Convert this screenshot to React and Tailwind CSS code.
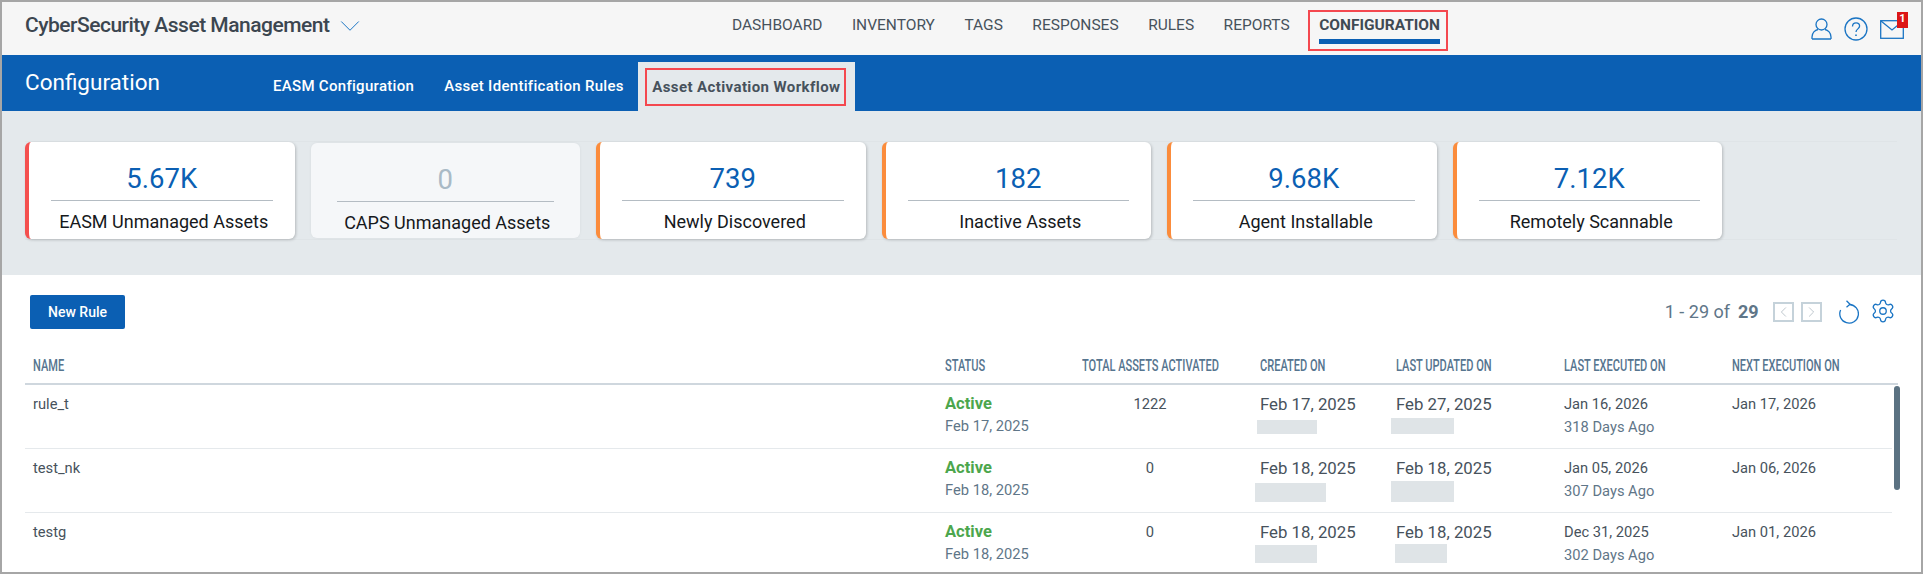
import { ChevronDown, ChevronLeft, ChevronRight, Settings } from 'lucide-react'

const NAV = ['DASHBOARD', 'INVENTORY', 'TAGS', 'RESPONSES', 'RULES', 'REPORTS']

const CARDS = [
  { value: '5.67K', label: 'EASM Unmanaged Assets', bar: 'border-l-[#f4504f]' },
  { value: '0', label: 'CAPS Unmanaged Assets', muted: true },
  { value: '739', label: 'Newly Discovered', bar: 'border-l-[#fb8c3c]' },
  { value: '182', label: 'Inactive Assets', bar: 'border-l-[#fb8c3c]' },
  { value: '9.68K', label: 'Agent Installable', bar: 'border-l-[#fb8c3c]' },
  { value: '7.12K', label: 'Remotely Scannable', bar: 'border-l-[#fb8c3c]' },
]

const ROWS = [
  {
    name: 'rule_t',
    activeOn: 'Feb 17, 2025',
    total: '1222',
    created: 'Feb 17, 2025',
    createdMask: 'w-[60px] h-[14px] mt-[5px] -ml-[3px]',
    updated: 'Feb 27, 2025',
    updatedMask: 'w-[63px] h-[16px] mt-[3px] -ml-[5px]',
    lastRun: 'Jan 16, 2026',
    daysAgo: '318 Days Ago',
    nextRun: 'Jan 17, 2026',
  },
  {
    name: 'test_nk',
    activeOn: 'Feb 18, 2025',
    total: '0',
    created: 'Feb 18, 2025',
    createdMask: 'w-[71px] h-[19px] mt-[4px] -ml-[5px]',
    updated: 'Feb 18, 2025',
    updatedMask: 'w-[63px] h-[21px] mt-[2px] -ml-[5px]',
    lastRun: 'Jan 05, 2026',
    daysAgo: '307 Days Ago',
    nextRun: 'Jan 06, 2026',
  },
  {
    name: 'testg',
    activeOn: 'Feb 18, 2025',
    total: '0',
    created: 'Feb 18, 2025',
    createdMask: 'w-[62px] h-[18px] mt-[2px] -ml-[5px]',
    updated: 'Feb 18, 2025',
    updatedMask: 'w-[52px] h-[19px] mt-[1px] -ml-[1px]',
    lastRun: 'Dec 31, 2025',
    daysAgo: '302 Days Ago',
    nextRun: 'Jan 01, 2026',
  },
]

const COLS = 'grid grid-cols-[912px_137px_178px_136px_168px_168px_1fr] pl-2'

function HeaderCell({ children }) {
  return (
    <span className="inline-block origin-left scale-x-[0.69] whitespace-nowrap text-[16px] font-medium text-[#56758f]">
      {children}
    </span>
  )
}

function StatCard({ value, label, bar, muted }) {
  return (
    <div
      className={
        muted
          ? 'my-px w-[269.5px] rounded-md bg-[#f5f7f9] px-[26px] text-center shadow-[0_0_3px_rgba(0,0,0,0.06)]'
          : `w-[269.5px] rounded-md border-l-4 bg-white pl-[22px] pr-[22px] text-center shadow-[1px_1px_3px_rgba(0,0,0,0.2)] ${bar}`
      }
    >
      <div className={`h-[58px] pt-[17px] text-[27.5px] leading-[40px] ${muted ? 'text-[#a9bac6]' : 'text-[#0b5fb3]'}`}>
        {value}
      </div>
      <div className="border-t border-[#b4bcc3] pl-[4px] pt-[9px] text-[18px] leading-[24px] text-[#16191c]">{label}</div>
    </div>
  )
}

function UserIcon() {
  return (
    <svg width="21" height="22" viewBox="0 0 21 22" fill="none" stroke="#1b75c4" strokeWidth="1.3">
      <circle cx="10.5" cy="6.5" r="5.5" />
      <path d="M1 21v-2c0-4 3-7 6-7.5M20 21v-2c0-4-3-7-6-7.5M1 21h19" />
    </svg>
  )
}

function HelpIcon() {
  return (
    <svg width="24" height="24" viewBox="0 0 24 24" fill="none" stroke="#1b75c4" strokeWidth="1.3">
      <circle cx="12" cy="12" r="11" />
      <path d="M8.5 9.5c0-2.2 1.6-3.6 3.6-3.6s3.5 1.4 3.5 3.2c0 2.8-3.6 2.8-3.6 6" />
      <path d="M12 17.5v1.6" strokeWidth="1.6" />
    </svg>
  )
}

function MailIcon() {
  return (
    <svg width="24" height="19" viewBox="0 0 24 19" fill="none" stroke="#1b75c4" strokeWidth="1.3">
      <rect x="0.7" y="0.7" width="22.6" height="17.6" />
      <path d="M1 1l11 9 11-9" />
    </svg>
  )
}

function RefreshIcon() {
  return (
    <svg width="21" height="24" viewBox="0 0 21 24" fill="none" stroke="#1b75c4" strokeWidth="1.3">
      <path d="M11.5 4.5A9.3 9.3 0 1 1 2.6 10" />
      <path d="M8.5 0.8l3.5 3.5-3.5 3" />
    </svg>
  )
}

function PagerButton({ children }) {
  return (
    <div className="flex h-[20px] w-[21px] items-center justify-center border-2 border-[#c5d2da] text-[#a3b0b8]">
      {children}
    </div>
  )
}

export default function App() {
  return (
    <div className="h-[574px] w-[1923px] overflow-hidden border-2 border-[#a6a6a6] bg-white font-['Roboto',sans-serif]">
      {/* Top nav */}
      <header className="relative flex h-[53px] items-start bg-[#f6f6f6] pl-[23px]">
        <div className="flex h-[46px] w-[707px] items-center pt-px">
          <span className="text-[21px] font-medium tracking-[-0.5px] text-[#3c4650]">CyberSecurity Asset Management</span>
          <ChevronDown className="ml-[4px] text-[#1b75c4]" size={34} strokeWidth={0.7} />
        </div>
        <nav className="flex gap-[29.5px] pt-[13px]">
          {NAV.map((item) => (
            <span key={item} className="text-[15.5px] leading-[20px] text-[#47525c]">
              {item}
            </span>
          ))}
          <div className="relative">
            <span className="block text-[15.5px] font-bold leading-[20px] text-[#3f4a54]">CONFIGURATION</span>
            <div className="mt-[4px] h-[5px] bg-[#0b5fb3]" />
            <div className="absolute -left-[11px] -right-[8px] -top-[5px] h-[41px] border-2 border-[#f4484f]" />
          </div>
        </nav>
        <div className="ml-auto flex items-center gap-[12px] pr-[17px] pt-[15px]">
          <UserIcon />
          <HelpIcon />
          <div className="relative">
            <MailIcon />
            <span className="absolute -right-[4px] -top-[8px] flex h-[16px] w-[11px] items-center justify-center bg-[#dc1616] text-[11px] font-bold text-white">
              1
            </span>
          </div>
        </div>
      </header>

      {/* Section bar */}
      <div className="flex h-[56px] items-end bg-[#0b5fb3] pl-[23px]">
        <h1 className="h-[56px] w-[248px] pt-[12px] text-[22.5px] leading-[30px] text-white">Configuration</h1>
        <div className="flex gap-[30px] self-stretch pt-[21px] text-[15px] font-medium leading-[20px] tracking-[0.3px] text-white">
          <span>EASM Configuration</span>
          <span>Asset Identification Rules</span>
        </div>
        <div className="ml-[14px] h-[49px] w-[217px] bg-[#e4e9ec] px-[7px] pt-[6px]">
          <div className="flex h-[38px] w-[201px] items-center justify-center border-2 border-[#f4484f] pl-[2px] text-[15px] font-bold tracking-[0.4px] text-[#47525c]">
            Asset Activation Workflow
          </div>
        </div>
      </div>

      {/* Stat cards */}
      <section className="h-[164px] bg-[#e4e9ec] pl-[23px] pr-[24px] pt-[30px]">
        <div className="flex h-[99px] gap-[16px] border-y border-[#dfe4e7]">
          {CARDS.map((card) => (
            <StatCard key={card.label} {...card} />
          ))}
        </div>
      </section>

      {/* Table */}
      <section className="relative px-[23px]">
        <div className="flex h-[74px] items-start justify-between pl-[5px] pr-[2px] pt-[20px]">
          <button className="h-[34px] w-[95px] rounded-[2px] bg-[#0b5fb3] text-[14px] font-medium text-white">New Rule</button>
          <div className="flex items-start">
            <span className="mt-[5px] text-[18px] leading-[24px] text-[#5f7688]">1 - 29 of</span>
            <span className="ml-[8px] mt-[5px] w-[35px] text-[18px] font-bold leading-[24px] text-[#5f7688]">29</span>
            <div className="mt-[7px] flex gap-[7px]">
              <PagerButton>
                <ChevronLeft size={18} strokeWidth={1} />
              </PagerButton>
              <PagerButton>
                <ChevronRight size={18} strokeWidth={1} />
              </PagerButton>
            </div>
            <div className="ml-[16px] mt-[5px]">
              <RefreshIcon />
            </div>
            <Settings className="ml-[11px] mt-[3px] text-[#1b75c4]" size={26} strokeWidth={1.2} />
          </div>
        </div>

        <div className={`${COLS} h-[36px] items-center border-b-2 border-[#cfd7de] pb-px`}>
          <HeaderCell>NAME</HeaderCell>
          <HeaderCell>STATUS</HeaderCell>
          <HeaderCell>TOTAL ASSETS ACTIVATED</HeaderCell>
          <HeaderCell>CREATED ON</HeaderCell>
          <HeaderCell>LAST UPDATED ON</HeaderCell>
          <HeaderCell>LAST EXECUTED ON</HeaderCell>
          <HeaderCell>NEXT EXECUTION ON</HeaderCell>
        </div>

        <div className="mr-[6px]">
          {ROWS.map((row) => (
            <div key={row.name} className={`${COLS} h-[64px] border-b border-[#e5e9ec] pt-[8px] text-[14.7px] leading-[22px] text-[#47525c]`}>
              <div>{row.name}</div>
              <div>
                <div className="text-[16.5px] font-bold text-[#4ca64c]">{row.activeOn && 'Active'}</div>
                <div className="text-[#5f7688]">{row.activeOn}</div>
              </div>
              <div className="w-[136px] text-center">{row.total}</div>
              <div className="text-[16.8px]">
                <div>{row.created}</div>
                <div className={`bg-[#dfe4e7] ${row.createdMask}`} />
              </div>
              <div className="text-[16.8px]">
                <div>{row.updated}</div>
                <div className={`bg-[#dfe4e7] ${row.updatedMask}`} />
              </div>
              <div>
                <div>{row.lastRun}</div>
                <div className="mt-px text-[#5f7688]">{row.daysAgo}</div>
              </div>
              <div>{row.nextRun}</div>
            </div>
          ))}
        </div>

        {/* scrollbar thumb */}
        <div className="absolute right-[21px] top-[111px] h-[104px] w-[6px] rounded-[3px] bg-[#5b7282]" />
      </section>
    </div>
  )
}
